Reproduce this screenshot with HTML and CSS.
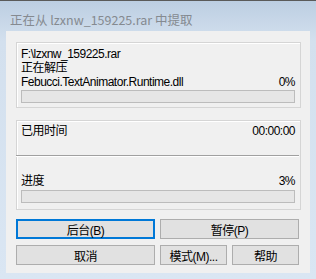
FILE: index.html
```html
<!DOCTYPE html>
<html>
<head>
    <title>正在从 lzxnw_159225.rar 中提取</title>
    <link rel="stylesheet" href="styles.css">
</head>
<body>
    <div class="window">
        <div class="titlebar">正在从 lzxnw_159225.rar 中提取</div>
        <div class="client">
            <div class="group first">
                <div class="line">F:\lzxnw_159225.rar</div>
                <div class="line">正在解压</div>
                <div class="line row"><span>Febucci.TextAnimator.Runtime.dll</span><span>0%</span></div>
                <div class="bar"></div>
            </div>
            <div class="group second">
                <div class="line row"><span>已用时间</span><span>00:00:00</span></div>
                <div class="sep"></div>
                <div class="line row"><span>进度</span><span>3%</span></div>
                <div class="bar"></div>
            </div>
            <div class="buttons top">
                <button class="focus">后台(B)</button>
                <button>暂停(P)</button>
            </div>
            <div class="buttons bottom">
                <button>取消</button>
                <button>模式(M)...</button>
                <button>帮助</button>
            </div>
        </div>
    </div>
</body>
</html>
```

FILE: styles.css
```css
body { margin: 0; font-family: "Liberation Sans", "Noto Sans CJK SC", sans-serif; font-size: 12px; color: #000; }

.window {
    width: 316px;
    height: 279px;
    box-sizing: border-box;
    padding: 0 6px 6px 6px;
    border-top: 1px solid #5a5a5a;
    background: linear-gradient(#bccee2, #d3e0ee 40px, #dae6f3);
    display: flex;
    flex-direction: column;
}

.titlebar {
    height: 30px;
    line-height: 38px;
    padding-left: 4px;
    font-family: "Noto Sans CJK SC", sans-serif;
    font-size: 12.5px;
    color: #858a90;
    white-space: nowrap;
}

.client {
    flex: 1;
    background: #f0f0f0;
    padding: 11px 0 0 10px;
    letter-spacing: -0.5px;
}

.group {
    width: 285px;
    box-sizing: border-box;
    border: 1px solid #d5d5d5;
    box-shadow: inset 1px 1px #fff;
    padding: 4px 5px 0 4px;
}
.group.first { height: 66px; }
.group.second { height: 90px; margin-top: 12px; padding-top: 3px; }

.line { height: 14px; line-height: 14px; white-space: nowrap; }
.row { display: flex; justify-content: space-between; }

.bar {
    height: 13px;
    box-sizing: border-box;
    border: 1px solid #bcbcbc;
    background: #e6e6e6;
    margin-top: 1px;
}
.second .bar { margin-top: 2px; }

.sep {
    height: 1px;
    background: #a0a0a0;
    border-bottom: 1px solid #fff;
    margin: 17px -4px 17px -5px;
}

.buttons { display: grid; }
.buttons.top { grid-template-columns: 139px 139px; column-gap: 5px; margin-top: 9px; }
.buttons.bottom { grid-template-columns: 139px 67px 67px; column-gap: 5px; margin-top: 6px; }

button {
    height: 20px;
    padding: 0;
    font: inherit;
    letter-spacing: inherit;
    color: #000;
    background: #e1e1e1;
    border: 1px solid #adadad;
}
button.focus { border: 2px solid #0078d7; }
```
